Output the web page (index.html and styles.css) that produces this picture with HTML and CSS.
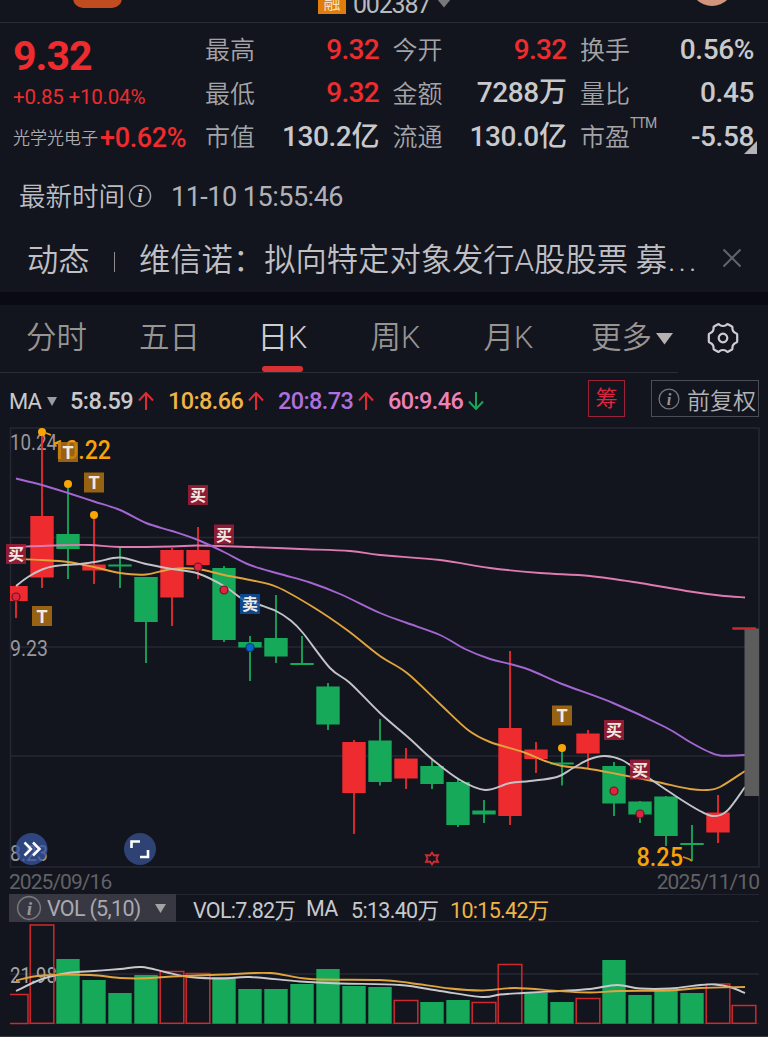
FILE: index.html
```html
<!DOCTYPE html>
<html lang="zh-CN">
<head>
<meta charset="UTF-8">
<meta name="viewport" content="width=device-width, initial-scale=1.0">
<title>维信诺 002387</title>
<link rel="stylesheet" href="styles.css">
</head>
<body>

<header class="topbar">
  <span class="pill"></span>
  <span class="margin-tag">融</span>
  <span class="code">002387</span>
  <svg class="code-arrow" width="14" height="9"><path d="M0 0h14L7 8.500z" fill="#77787c"/></svg>
  <span class="avatar"></span>
</header>

<section class="quote">
  <div class="price-col">
    <div class="price">9.32</div>
    <div class="change">+0.85 +10.04%</div>
    <div class="sector"><span class="sector-name">光学光电子</span><span class="sector-change">+0.62%</span></div>
  </div>
  <dl class="stats">
    <div><dt>最高</dt><dd class="up">9.32</dd></div>
    <div><dt>今开</dt><dd class="up">9.32</dd></div>
    <div><dt>换手</dt><dd>0.56%</dd></div>
    <div><dt>最低</dt><dd class="up">9.32</dd></div>
    <div><dt>金额</dt><dd>7288<b>万</b></dd></div>
    <div><dt>量比</dt><dd>0.45</dd></div>
    <div><dt>市值</dt><dd>130.2<b>亿</b></dd></div>
    <div><dt>流通</dt><dd>130.0<b>亿</b></dd></div>
    <div><dt>市盈<sup>TTM</sup></dt><dd>-5.58</dd></div>
  </dl>
  <svg class="expand" width="13" height="13"><path d="M13 0v13H0z" fill="#b4b4b6"/></svg>
</section>

<div class="update">
  <span class="update-label">最新时间</span>
  <svg class="info" width="24" height="24" viewBox="0 0 24 24"><circle cx="12" cy="12" r="10.600"/><text x="12" y="18">i</text></svg>
  <span class="update-time">11-10 15:55:46</span>
</div>

<div class="news">
  <span class="news-type">动态</span>
  <i class="news-bar"></i>
  <span class="news-title">维信诺：拟向特定对象发行A股股票 募<span class="dots">...</span></span>
  <svg class="close" width="20" height="20" viewBox="0 0 20 20"><path d="M1.500 1.500l17 17M18.500 1.500l-17 17"/></svg>
</div>

<nav class="tabs">
  <div class="tab-list">
    <a>分时</a>
    <a>五日</a>
    <a class="active">日K</a>
    <a>周K</a>
    <a>月K</a>
    <a class="more">更多<svg width="17" height="12"><path d="M0 0h17L8.500 11.500z" fill="#b4b1ae"/></svg></a>
  </div>
  <svg class="gear" width="32" height="32" viewBox="-16 -16 32 32">
    <path d="M-5-13.800Q-4.200-14.200-3.500-13.200Q0-10.800 3.500-13.200Q4.200-14.200 5-13.800L9-11.500Q9.800-11 9.400-10Q9.300-6.300 13-4.700Q14.200-4.500 14.200-3.500V3.500Q14.200 4.500 13 4.700Q9.300 6.300 9.400 10Q9.800 11 9 11.500L5 13.800Q4.200 14.200 3.500 13.200Q0 10.800-3.500 13.200Q-4.200 14.200-5 13.800L-9 11.500Q-9.800 11-9.400 10Q-9.300 6.300-13 4.700Q-14.200 4.500-14.200 3.500V-3.500Q-14.200-4.500-13-4.700Q-9.300-6.300-9.400-10Q-9.800-11-9-11.500z"/>
    <circle r="4.300"/>
  </svg>
</nav>

<div class="ma-row">
  <span class="ma-name">MA</span>
  <svg class="ma-arrow" width="10" height="9"><path d="M0 0h10L5 9z" fill="#9b9c9f"/></svg>
  <span class="ma ma5">5:8.59</span><svg class="trend up-arrow" width="16" height="18"><path d="M8 18V1M1 8.500L8 1l7 7.500"/></svg>
  <span class="ma ma10">10:8.66</span><svg class="trend up-arrow" width="16" height="18"><path d="M8 18V1M1 8.500L8 1l7 7.500"/></svg>
  <span class="ma ma20">20:8.73</span><svg class="trend up-arrow" width="16" height="18"><path d="M8 18V1M1 8.500L8 1l7 7.500"/></svg>
  <span class="ma ma60">60:9.46</span><svg class="trend down-arrow" width="16" height="18"><path d="M8 0v17M1 9.500L8 17l7-7.500"/></svg>
  <span class="chip-btn">筹</span>
  <span class="adjust-btn">
    <svg class="info dim" width="22" height="22" viewBox="0 0 24 24"><circle cx="12" cy="12" r="10.800"/><text x="12" y="18">i</text></svg>
    前复权
  </span>
</div>

<svg class="kline" id="kline" width="768" height="444" viewBox="0 426 768 444"></svg>

<div class="dates"><span>2025/09/16</span><span>2025/11/10</span></div>

<div class="vol-row">
  <span class="vol-select">
    <svg class="info dim" width="26" height="26" viewBox="0 0 24 24"><circle cx="12" cy="12" r="10.500"/><text x="12" y="18">i</text></svg>
    <span class="vol-name">VOL (5,10)</span>
    <svg width="11" height="9"><path d="M0 0h11L5.500 9z" fill="#a3a3a5"/></svg>
  </span>
  <span class="vol-now">VOL:7.82万</span>
  <span class="vol-ma">MA</span>
  <span class="vol-ma5">5:13.40万</span>
  <span class="vol-ma10">10:15.42万</span>
</div>

<svg class="volume" id="volume" width="768" height="115" viewBox="0 922 768 115"></svg>

<script src="chart.js"></script>
</body>
</html>
```
FILE: styles.css
```css
* {
  box-sizing: border-box;
}
body {
  margin: 0;
  width: 768px;
  height: 1037px;
  overflow: hidden;
  background: #12151e;
  color: #c9c9cc;
  font-family: Roboto, "Noto Sans CJK SC", sans-serif;
}
svg {
  display: block;
  flex: none;
}

/* top bar */
.topbar {
  display: flex;
  align-items: flex-end;
  height: 23px;
  padding-bottom: 8px;
  border-bottom: 1px solid #292b35;
  overflow: hidden;
}
.pill {
  width: 49px;
  height: 26px;
  margin: 0 196px 7px 73px;
  margin-bottom: 6px;
  border-radius: 10px;
  background: #c04c20;
  flex: none;
}
.margin-tag {
  width: 28px;
  height: 24px;
  background: #e17d0a;
  color: #f6e3c8;
  font-size: 17px;
  line-height: 26px;
  text-align: center;
}
.code {
  margin-left: 7px;
  width: 78px;
  font-size: 25px;
  line-height: 18px;
  letter-spacing: -1.200px;
  color: #b9babd;
}
.code-arrow {
  margin: 0 0 6px 6px;
}
.avatar {
  width: 44px;
  height: 44px;
  margin: 0 0 8px 239px;
  border-radius: 50%;
  background: #d1957e;
  flex: none;
}

/* quote */
.quote {
  position: relative;
  display: flex;
  height: 137px;
  padding: 5px 13px 0;
}
.price-col {
  width: 192px;
  color: #ef2b2e;
  white-space: nowrap;
}
.price {
  height: 54px;
  font-size: 41px;
  line-height: 56px;
  font-weight: 700;
  letter-spacing: -1px;
}
.change {
  height: 34px;
  font-size: 20.500px;
  line-height: 30px;
  letter-spacing: -0.200px;
}
.sector {
  display: flex;
  align-items: center;
  height: 44px;
}
.sector-name {
  width: 87px;
  margin-top: -3px;
  font-size: 17px;
  font-weight: 350;
  color: #acacb0;
}
.sector-change {
  font-size: 27px;
  font-weight: 500;
  letter-spacing: -0.350px;
}
.stats {
  display: grid;
  grid-template-columns: 174px 174px 174px;
  grid-auto-rows: 43.500px;
  column-gap: 13.500px;
  margin: 0;
}
.stats div {
  display: flex;
  justify-content: space-between;
  align-items: center;
  white-space: nowrap;
}
.stats dt {
  position: relative;
  margin-top: -3px;
  font-size: 25px;
  font-weight: 350;
  color: #a4a4a7;
}
.stats sup {
  position: absolute;
  left: 50px;
  top: -1px;
  font-size: 14px;
  line-height: 14px;
  font-weight: 400;
  letter-spacing: -0.900px;
}
.stats dd {
  margin: 0;
  font-size: 28px;
  line-height: 40px;
  font-weight: 500;
  letter-spacing: -0.400px;
}
.stats dd b {
  font-size: 28px;
  font-weight: 500;
}
.stats .up {
  color: #ef2b2e;
  letter-spacing: -0.700px;
}
.expand {
  position: absolute;
  right: 11px;
  bottom: 6px;
}

/* update time */
.update {
  display: flex;
  align-items: center;
  height: 72px;
  padding-left: 19px;
}
.update-label {
  width: 109px;
  margin-top: -3px;
  font-size: 26.500px;
  font-weight: 350;
  color: #bdbdc1;
}
.update-time {
  margin: 1px 0 0 19px;
  font-size: 27px;
  letter-spacing: -0.500px;
  color: #b2b2b6;
}
.info circle {
  fill: none;
  stroke: #a0a1a5;
  stroke-width: 1.400;
}
.info text {
  font: italic bold 18px "Liberation Serif", serif;
  text-anchor: middle;
  fill: #d0d0d3;
}
.info.dim circle {
  stroke: #77777d;
}
.info.dim text {
  fill: #95959a;
}

/* news */
.news {
  display: flex;
  align-items: center;
  height: 60px;
  padding: 0 26px 9px 27px;
  font-size: 31.300px;
  font-weight: 350;
  color: #c0c0c4;
  white-space: nowrap;
}
.news-type {
  width: 87px;
}
.news-bar {
  width: 1px;
  height: 20px;
  margin: 9px 24px 0 0;
  background: #8c8c90;
}
.news-title {
  flex: 1;
}
.dots {
  margin-left: 1px;
  letter-spacing: 3px;
}
.close {
  fill: none;
  stroke: #62636f;
  stroke-width: 2;
}

/* tabs */
.tabs {
  display: flex;
  align-items: flex-start;
  height: 81px;
  border-top: 13px solid #090a13;
}
.tab-list {
  display: flex;
  width: 678px;
  height: 68px;
  border-bottom: 1px solid #2a2c36;
}
.tab-list a {
  position: relative;
  width: 113px;
  font-size: 30.500px;
  line-height: 65px;
  font-weight: 350;
  text-align: center;
  color: #979492;
}
.tab-list .active {
  color: #cdcdd2;
}
.active::after {
  content: "";
  position: absolute;
  left: 36px;
  bottom: 0;
  width: 41px;
  height: 6px;
  border-radius: 3px;
  background: #d93033;
}
.tab-list .more {
  display: flex;
  align-items: center;
  height: 65px;
  padding-left: 26px;
}
.more svg {
  margin: 2px 0 0 4px;
}
.gear {
  margin: 17px 0 0 29px;
  fill: none;
  stroke: #cccccf;
  stroke-width: 2.200;
}

/* moving averages */
.ma-row {
  display: flex;
  align-items: center;
  height: 53px;
  padding: 3px 9px 0 9px;
  font-size: 23.500px;
  font-weight: 500;
  white-space: nowrap;
}
.ma-name {
  width: 38px;
  font-size: 22px;
  font-weight: 400;
  letter-spacing: -0.800px;
}
.ma-arrow {
  margin-right: 13px;
}
.ma {
  width: 80px;
  letter-spacing: -0.600px;
}
.ma5 {
  width: 68px;
  letter-spacing: -0.500px;
}
.ma10 {
  color: #f0b445;
}
.ma20 {
  color: #ae70dc;
}
.ma60 {
  color: #ee82b8;
}
.trend {
  margin-right: 14px;
  fill: none;
  stroke-width: 2;
}
.up-arrow {
  stroke: #e02b33;
}
.down-arrow {
  stroke: #17a558;
}
.chip-btn {
  width: 37px;
  height: 37px;
  margin: -5px 26px 0 auto;
  border: 1px solid #9b2038;
  font-size: 22px;
  line-height: 36px;
  font-weight: 400;
  text-align: center;
  color: #dc2741;
}
.adjust-btn {
  display: flex;
  align-items: center;
  gap: 7px;
  width: 108px;
  height: 37px;
  margin-top: -5px;
  padding-left: 6px;
  border: 1px solid #4b4c54;
  font-size: 23px;
  font-weight: 350;
  color: #b3b3b6;
}

/* chart */
.kline text {
  font-size: 22px;
  fill: #97979b;
}
.kline .extreme {
  font-size: 25px;
  font-weight: 500;
  fill: #f9a206;
}
.kline .badge {
  font-size: 16px;
  font-weight: 700;
  text-anchor: middle;
  fill: #f3e9e4;
}
.kline .badge-t {
  font-size: 18px;
}
.volume text {
  font-size: 22px;
  fill: #a5a5a8;
}
.dates {
  display: flex;
  justify-content: space-between;
  height: 24px;
  padding: 0 9px 0 9px;
  font-size: 21px;
  line-height: 24px;
  letter-spacing: -0.950px;
  color: #626266;
}

/* volume header */
.vol-row {
  display: flex;
  align-items: center;
  height: 28px;
  margin: 0 9px;
  border-top: 1px solid #242631;
  border-bottom: 1px solid #242631;
  font-size: 21.500px;
  letter-spacing: -0.700px;
  white-space: nowrap;
}
.vol-select {
  display: flex;
  align-items: center;
  width: 167px;
  height: 28px;
  padding-left: 7px;
  margin-right: 17px;
  background: #373841;
  color: #aaa9b0;
}
.vol-name {
  width: 108px;
  margin-left: 5px;
}
.vol-now {
  width: 113px;
}
.vol-ma {
  width: 45px;
}
.vol-ma5 {
  width: 99px;
}
.vol-ma10 {
  color: #efb445;
}
```
FILE: chart.js
```js
var RED = "#ee2b2e", GREEN = "#17a95a";
var GRID = "#262833";
var STEP = 26, FIRST = 16;

// up/down, body top, body bottom, wick top, wick bottom, volume top
var candles = [
  ["r", 586, 601, 586, 618, 994],
  ["r", 516, 577.5, 432, 588, 924.5],
  ["g", 534, 549, 484, 579, 959],
  ["r", 564.5, 570.5, 515, 584, 980, "g"],
  ["g", 564.5, 566.5, 548, 588, 993],
  ["g", 577, 622, 577, 663, 975],
  ["r", 550, 597.5, 548, 626, 971],
  ["r", 550, 565, 527, 579, 973],
  ["g", 568, 640, 566, 642, 977],
  ["g", 642, 647.5, 636, 681, 989],
  ["g", 638, 656.5, 595, 663, 989],
  ["g", 663, 665, 636, 664, 984],
  ["g", 686.5, 724.5, 683, 730, 969],
  ["r", 742, 793, 740, 834, 986, "g"],
  ["g", 740.5, 782, 719, 785.5, 987],
  ["r", 758.5, 778.5, 748, 789, 1000],
  ["g", 766, 784, 759, 789, 1002],
  ["g", 782, 825, 778, 827, 1000],
  ["g", 810.5, 814.5, 800, 823, 1002, "r"],
  ["r", 728, 816, 651, 825, 964],
  ["r", 749.5, 759, 742, 773, 993, "g"],
  ["g", 762.5, 764.5, 751, 785.5, 1002],
  ["r", 733.5, 753.5, 730, 768, 998],
  ["g", 766, 803.5, 762, 816, 960],
  ["g", 801.5, 814.5, 801, 823, 995],
  ["g", 796.5, 836, 796, 846, 988],
  ["g", 843, 845, 825, 861, 993],
  ["r", 812.5, 832.5, 795, 843, 983.5],
  ["r", 627.5, 629.5, 628, 629, 1005]
];

var ma5 = [[16,586],[28,577],[42,569.5],[55,566],[80,564],[98,561.5],[120,557.5],[146,564],[172,569],[198,573.5],[224,586],[244,600],[260,605],[276,611],[290,620],[303,633],[330,668],[350,683],[380,713],[410,739],[433,760],[460,780],[485,790],[510,783],[530,781],[557,777],[573,768],[590,759],[605,756],[622,760],[640,772],[677,797],[700,811],[713,816],[727,811],[745,787]];
var ma10 = [[16,559],[42,560],[68,562],[94,567],[120,573],[146,574.5],[172,569],[198,569],[224,575],[250,580],[277,587],[313,607],[347,630],[380,656],[407,673],[440,704],[468,730],[490,742],[523,752],[545,761],[562,766],[587,768.5],[617,774],[657,782],[690,789],[707,790],[720,787],[745,771]];
var ma20 = [[16,478.5],[42,485],[68,493],[94,501.5],[120,510],[146,523],[172,531],[198,540],[224,552],[250,565],[280,574],[310,582.5],[340,594],[380,613],[407,623],[440,635],[465,649],[490,659],[510,664],[530,670],[562,684],[613,703],[665,727],[690,742],[707,751],[720,755.5],[745,755]];
var ma60 = [[16,547],[60,545.3],[90,545],[120,547],[172,546.5],[198,545.5],[250,547],[300,549],[350,551],[380,555],[440,560],[490,568],[540,573],[590,576],[640,583],[690,591.5],[720,595.5],[745,597.5]];

var vol5 = [[16,991],[42,979],[68,973],[94,971],[120,969],[142,967],[165,972],[190,977],[224,978.5],[250,977],[300,981.5],[340,983.5],[400,985],[440,991],[482,997],[500,994.5],[523,993],[560,991],[590,989],[617,985],[640,988.5],[670,988.5],[700,985],[715,984.5],[730,987],[745,993]];
var vol10 = [[16,980.5],[42,975.5],[90,975],[120,978],[146,978.3],[172,976.5],[224,974.5],[270,973],[310,979],[380,980],[410,983],[450,988.5],[482,990.5],[515,988],[560,991],[590,992.5],[620,991],[670,990.5],[700,988],[745,987]];

function line(x1, y1, x2, y2, color, width) {
  return '<path d="M' + x1 + " " + y1 + "L" + x2 + " " + y2 + '" stroke="' + color + '" stroke-width="' + (width || 1.5) + '"/>';
}

function rect(x, y, w, h, fill) {
  return '<rect x="' + x + '" y="' + y + '" width="' + w + '" height="' + h + '" fill="' + fill + '"/>';
}

// smooth curve through all points
function curve(p, color) {
  var d = "M" + p[0];
  for (var i = 0; i < p.length - 1; i++) {
    var a = p[i - 1] || p[i], b = p[i], c = p[i + 1], e = p[i + 2] || c;
    d += "C" + [b[0] + (c[0] - a[0]) / 6, b[1] + (c[1] - a[1]) / 6, c[0] - (e[0] - b[0]) / 6, c[1] - (e[1] - b[1]) / 6, c[0], c[1]].join(" ");
  }
  return '<path d="' + d + '" fill="none" stroke="' + color + '" stroke-width="1.9"/>';
}

function label(x, y, w, text, cls) {
  return '<text x="' + x + '" y="' + y + '" textLength="' + w + '" lengthAdjust="spacingAndGlyphs" class="' + (cls || "") + '">' + text + "</text>";
}

function dot(x, y, color, stroke) {
  return '<circle cx="' + x + '" cy="' + y + '" r="4" fill="' + color + '" stroke="' + (stroke || color) + '" stroke-width="' + (stroke ? 1.2 : 0) + '"/>';
}

function badge(x, y, text) {
  var fill = { T: "rgba(185,118,14,0.8)", "买": "rgba(172,30,58,0.8)", "卖": "rgba(12,84,168,0.8)" }[text];
  return rect(x - 10, y - 10, 20, 20, fill) +
    '<text class="badge' + (text === "T" ? " badge-t" : "") + '" x="' + x + '" y="' + (y + (text === "T" ? 6.5 : 6)) + '">' + text + "</text>";
}

function drawKline() {
  var s = '<rect x="10.500" y="428" width="748.500" height="439" fill="none" stroke="' + GRID + '" stroke-width="1.500"/>';
  [537.5, 647, 756].forEach(function (y) { s += line(10, y, 759, y, GRID); });

  s += label(10, 450, 47, "10.24") + label(10, 655.5, 38, "9.23");

  candles.forEach(function (c, i) {
    var x = FIRST + i * STEP, color = c[0] === "r" ? RED : GREEN;
    var left = i === 0 ? 10 : x - 11.7;
    s += line(x, c[3], x, c[4], color, 1.8);
    s += rect(left, c[1], x + 11.7 - left, c[2] - c[1], color);
  });

  s += curve(ma60, "#e07ab2") + curve(ma20, "#a566d2") + curve(ma10, "#dfa43c") + curve(ma5, "#c4c4c8");

  s += rect(744.5, 628.5, 14.5, 167.5, "#5c5c5c") + line(733, 628.5, 756, 628.5, "#c52c30", 1.8);

  s += label(52, 458.5, 59, "10.22", "extreme") + label(636.5, 865.5, 46.5, "8.25", "extreme");
  s += line(46, 433, 51, 435, "#f9a206", 1.8) + '<path d="M683 857l6 2 3 2" fill="none" stroke="#d98e10" stroke-width="1.700"/>';

  [[42, 432], [68, 484], [94, 515], [562, 748]].forEach(function (p) { s += dot(p[0], p[1], "#fba505"); });
  [[16, 597], [198, 567], [224, 590], [614, 791], [640, 814]].forEach(function (p) { s += dot(p[0], p[1], "#e0233f", "#6a1622"); });
  s += dot(250, 647.5, "#0866cc", "#093c78");

  s += badge(68, 452, "T") + badge(94, 482.5, "T") + badge(42, 616, "T") + badge(562, 715.5, "T");
  s += badge(16, 554, "买") + badge(198, 495, "买") + badge(224, 534.5, "买") + badge(614, 730, "买") + badge(640, 769.5, "买");
  s += badge(250, 604, "卖");

  // event marker
  s += '<path d="M432 852.500l2 3 4-0.500-1.500 3.500 1.500 3.500-4-0.500-2 3-2-3-4 0.500 1.500-3.500-1.500-3.500 4 0.500z" fill="none" stroke="#d12c32" stroke-width="1.800"/>';

  s += label(10, 861, 38, "8.23");
  s += '<circle cx="31.500" cy="849" r="16" fill="#3a56a0" fill-opacity="0.750"/>';
  s += '<path d="M24.500 842.500l6.500 6.500-6.500 6.500M33 842.500l6.500 6.500-6.500 6.500" fill="none" stroke="#fff" stroke-width="2.500"/>';
  s += '<circle cx="140" cy="849" r="16" fill="#2e4274"/>';
  s += '<path d="M131.500 848v-6.500h8.500M148 850v7h-8" fill="none" stroke="#fff" stroke-width="2.600"/>';
  document.getElementById("kline").innerHTML = s;
}

function drawVolume() {
  var s = line(10, 974, 759, 974, GRID) + line(10, 1023.5, 759, 1023.5, GRID, 1) + line(0, 1036.5, 768, 1036.5, "#343640", 1);
  s += label(10, 982.5, 47, "21.98");
  candles.forEach(function (c, i) {
    var x = FIRST + i * STEP, color = c[6] || c[0], top = c[5];
    if (color === "g") {
      s += rect(x - 11.7, top, 23.4, 1023.7 - top, GREEN);
    } else if (i === 0) {
      s += '<path d="M10 994.500H28V1023.500H10" fill="none" stroke="#cf282d" stroke-width="1.500"/>';
    } else {
      s += '<rect x="' + (x - 11.8) + '" y="' + (top + 0.5) + '" width="23.600" height="' + (1022.8 - top) + '" fill="none" stroke="#cf282d" stroke-width="1.500"/>';
    }
  });
  s += curve(vol5, "#c9c9cc") + curve(vol10, "#dfa43c");
  document.getElementById("volume").innerHTML = s;
}

drawKline();
drawVolume();
```
